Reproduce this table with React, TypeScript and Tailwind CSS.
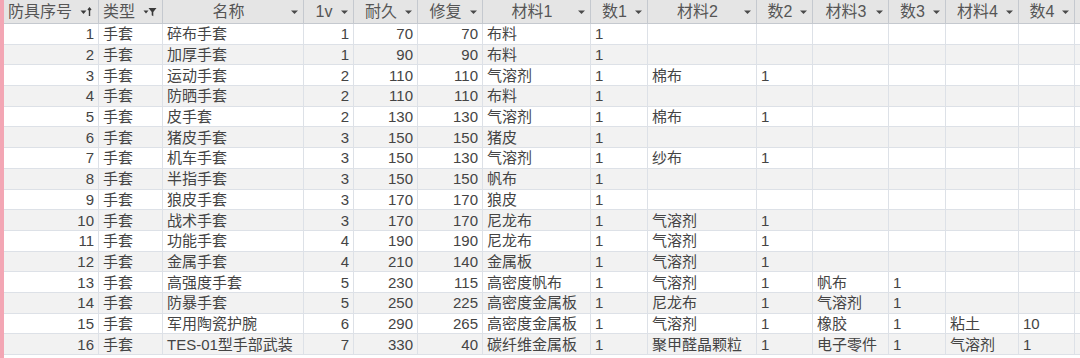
import React from 'react';

type Col = { title: string; w: number; align: 'left' | 'right'; icon?: 'sort' | 'filter' };

const cols: Col[] = [
    { title: '防具序号', w: 95, align: 'right', icon: 'sort' },
    { title: '类型', w: 64, align: 'left', icon: 'filter' },
    { title: '名称', w: 141, align: 'left' },
    { title: '1v', w: 50, align: 'right' },
    { title: '耐久', w: 64, align: 'right' },
    { title: '修复', w: 65, align: 'right' },
    { title: '材料1', w: 108, align: 'left' },
    { title: '数1', w: 57, align: 'left' },
    { title: '材料2', w: 109, align: 'left' },
    { title: '数2', w: 56, align: 'left' },
    { title: '材料3', w: 76, align: 'left' },
    { title: '数3', w: 57, align: 'left' },
    { title: '材料4', w: 73, align: 'left' },
    { title: '数4', w: 56, align: 'left' },
];

const rows: string[][] = [
    ['1', '手套', '碎布手套', '1', '70', '70', '布料', '1', '', '', '', '', '', ''],
    ['2', '手套', '加厚手套', '1', '90', '90', '布料', '1', '', '', '', '', '', ''],
    ['3', '手套', '运动手套', '2', '110', '110', '气溶剂', '1', '棉布', '1', '', '', '', ''],
    ['4', '手套', '防晒手套', '2', '110', '110', '布料', '1', '', '', '', '', '', ''],
    ['5', '手套', '皮手套', '2', '130', '130', '气溶剂', '1', '棉布', '1', '', '', '', ''],
    ['6', '手套', '猪皮手套', '3', '150', '150', '猪皮', '1', '', '', '', '', '', ''],
    ['7', '手套', '机车手套', '3', '150', '130', '气溶剂', '1', '纱布', '1', '', '', '', ''],
    ['8', '手套', '半指手套', '3', '150', '150', '帆布', '1', '', '', '', '', '', ''],
    ['9', '手套', '狼皮手套', '3', '170', '170', '狼皮', '1', '', '', '', '', '', ''],
    ['10', '手套', '战术手套', '3', '170', '170', '尼龙布', '1', '气溶剂', '1', '', '', '', ''],
    ['11', '手套', '功能手套', '4', '190', '190', '尼龙布', '1', '气溶剂', '1', '', '', '', ''],
    ['12', '手套', '金属手套', '4', '210', '140', '金属板', '1', '气溶剂', '1', '', '', '', ''],
    ['13', '手套', '高强度手套', '5', '230', '115', '高密度帆布', '1', '气溶剂', '1', '帆布', '1', '', ''],
    ['14', '手套', '防暴手套', '5', '250', '225', '高密度金属板', '1', '尼龙布', '1', '气溶剂', '1', '', ''],
    ['15', '手套', '军用陶瓷护腕', '6', '290', '265', '高密度金属板', '1', '气溶剂', '1', '橡胶', '1', '粘土', '10'],
    ['16', '手套', 'TES-01型手部武装', '7', '330', '40', '碳纤维金属板', '1', '聚甲醛晶颗粒', '1', '电子零件', '1', '气溶剂', '1'],
];

const Arrow = () => (
    <svg width="9" height="6" viewBox="0 0 9 6" className="shrink-0">
        <path d="M1 1.5h7L4.5 5z" fill="#4a4a4a" />
    </svg>
);

const SortIcon = () => (
    <svg width="12" height="10" viewBox="0 0 12 10" className="shrink-0">
        <path d="M0.5 3.5h6L3.5 7z" fill="#3a3a3a" />
        <path d="M9.5 9V1.5M8 3l1.5-1.8L11 3" stroke="#3a3a3a" strokeWidth="1.4" fill="none" />
    </svg>
);

const FilterIcon = () => (
    <svg width="14" height="10" viewBox="0 0 14 10" className="shrink-0">
        <path d="M0.5 3.5h5L3 6.5z" fill="#3a3a3a" />
        <path d="M5.5 1h8L10.3 5v4.3L8.7 8.2V5z" fill="#3a3a3a" />
    </svg>
);

const App: React.FC = () => {
    const template = cols.map(c => `${c.w}px`).join(' ');
    return (
        <div
            className="w-[1080px] h-[358px] overflow-hidden bg-white flex text-[15px] leading-none"
            style={{ fontFamily: '"Liberation Sans", "Noto Sans CJK SC", sans-serif' }}
        >
            <div className="w-[4px] shrink-0 bg-[#f3a6b4]" />
            <div className="flex-1">
                {/* header */}
                <div className="grid h-[24px] bg-[#e5e5e5] border-b border-[#c5c9cf] text-[16px]" style={{ gridTemplateColumns: template }}>
                    {cols.map(c => (
                        <div key={c.title} className={`flex items-center pl-1 pr-1 border-r border-[#c5c9cf] text-[#555555] ${c.icon ? 'gap-2' : ''}`}>
                            <span className={`whitespace-nowrap ${c.icon ? '' : 'flex-1 text-center'}`}>{c.title}</span>
                            {c.icon === 'sort' ? <SortIcon /> : c.icon === 'filter' ? <FilterIcon /> : <Arrow />}
                        </div>
                    ))}
                </div>
                {/* rows */}
                {rows.map((r, i) => (
                    <div
                        key={i}
                        className={`grid h-[20.7px] border-b border-[#dde1e7] ${i % 2 === 0 ? 'bg-white' : 'bg-[#f2f2f2]'}`}
                        style={{ gridTemplateColumns: template }}
                    >
                        {r.map((v, j) => (
                            <div
                                key={j}
                                className={`flex items-center px-1 border-r border-[#dde1e7] text-[#444444] whitespace-nowrap overflow-hidden ${cols[j].align === 'right' ? 'justify-end' : 'justify-start'}`}
                            >
                                {v}
                            </div>
                        ))}
                    </div>
                ))}
            </div>
        </div>
    );
};

export default App;
